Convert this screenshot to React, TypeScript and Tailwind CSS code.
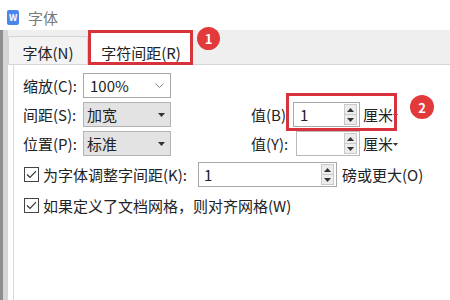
import React from "react";

function Up() {
  return (
    <svg width="7" height="4" viewBox="0 0 7 4">
      <path d="M0 4h7L3.5 0z" fill="#333" />
    </svg>
  );
}
function Down() {
  return (
    <svg width="7" height="4" viewBox="0 0 7 4">
      <path d="M0 0h7L3.5 4z" fill="#333" />
    </svg>
  );
}

function Spinner() {
  return (
    <div className="w-[13px] h-[21px] flex flex-col border border-[#c9c9c9] bg-[#ececec]">
      <div className="flex-1 flex items-center justify-center border-b border-[#c9c9c9]">
        <Up />
      </div>
      <div className="flex-1 flex items-center justify-center">
        <Down />
      </div>
    </div>
  );
}

function Unit() {
  return (
    <div className="flex items-center ml-[3px]">
      <span>厘米</span>
      <svg width="5" height="3" viewBox="0 0 5 3" className="mt-[1px]">
        <path d="M0 0h5L2.5 3z" fill="#333" />
      </svg>
    </div>
  );
}

function Check() {
  return (
    <div className="w-[15px] h-[15px] border border-[#444] bg-white flex items-center justify-center">
      <svg width="11" height="9" viewBox="0 0 11 9">
        <path d="M1 4.5l3 3L10 1.2" stroke="#333" strokeWidth="1.2" fill="none" />
      </svg>
    </div>
  );
}

export default function App() {
  return (
    <div className="w-[450px] h-[300px] bg-white relative overflow-hidden flex flex-col font-['Noto_Sans_CJK_SC','Noto_Sans',sans-serif] text-[15px] text-[#222] leading-none">
      {/* title bar */}
      <div className="h-[30px] flex items-center pl-[7px] pt-[4px] shrink-0">
        <div className="w-[12px] h-[15px] rounded-[2px] bg-[#4a86ec] flex items-center justify-center text-white text-[9px] font-bold">
          W
        </div>
        <span className="ml-[9px] text-[15px] text-[#7a7a7a]">字体</span>
      </div>

      <div className="flex flex-1">
        <div className="w-[8px] border-l-[3px] border-[#8e8e8e] bg-[#d6d6d6]" />
        <div className="flex-1 flex flex-col">
          {/* tab band */}
          <div className="h-[35px] bg-[#efefef] border-b border-[#d7d7d7] flex items-end shrink-0">
            <div className="w-[80px] h-[28px] border border-b-0 border-[#d5d5d5] bg-[#f3f3f3] flex items-center justify-center pt-[3px]">
              字体(N)
            </div>
            <div className="ml-[2px] w-[102px] h-[34px] bg-white -mb-px flex items-center justify-center pt-[8px]">
              字符间距(R)
            </div>
          </div>

          {/* panel */}
          <div className="flex-1 ml-[5px] border-l border-[#dadada] pl-[9px] pt-[8px] flex flex-col">
            <div className="grid grid-cols-[60px_88px_80px_42px_67px_auto] grid-rows-[25px_25px_25px] gap-y-[4px] items-center">
              <span>缩放(C):</span>
              <div className="h-[25px] border border-[#a8a8a8] bg-white flex items-center justify-between pl-[6px] pr-[6px]">
                <span>100%</span>
                <svg width="9" height="5" viewBox="0 0 9 5">
                  <path d="M0.5 0.5l4 4 4-4" stroke="#888" strokeWidth="1" fill="none" />
                </svg>
              </div>
              <span />
              <span />
              <span />
              <span />

              <span>间距(S):</span>
              <div className="h-[25px] border border-[#b3b3b3] bg-[#e3e3e3] flex items-center justify-between pl-[3px] pr-[5px]">
                <span>加宽</span>
                <Down />
              </div>
              <span />
              <span>值(B)</span>
              <div className="h-[25px] border border-[#a8a8a8] bg-white flex items-center justify-between pl-[6px] pr-[2px]">
                <span>1</span>
                <Spinner />
              </div>
              <Unit />

              <span>位置(P):</span>
              <div className="h-[25px] border border-[#b3b3b3] bg-[#e3e3e3] flex items-center justify-between pl-[3px] pr-[5px]">
                <span>标准</span>
                <Down />
              </div>
              <span />
              <span>值(Y):</span>
              <div className="h-[25px] border border-[#b8b8b8] bg-white flex items-center justify-end pr-[2px] ml-[3px]">
                <Spinner />
              </div>
              <Unit />
            </div>

            <div className="mt-[6px] h-[25px] flex items-center">
              <div className="ml-[1px]">
                <Check />
              </div>
              <span className="ml-[4px] w-[155px]">为字体调整字间距(K):</span>
              <div className="w-[139px] h-[25px] border border-[#a8a8a8] bg-white flex items-center justify-between pl-[5px] pr-[2px]">
                <span>1</span>
                <Spinner />
              </div>
              <span className="ml-[5px]">磅或更大(O)</span>
            </div>

            <div className="mt-[6px] h-[25px] flex items-center">
              <div className="ml-[1px]">
                <Check />
              </div>
              <span className="ml-[4px]">如果定义了文档网格，则对齐网格(W)</span>
            </div>
          </div>
        </div>
      </div>

      {/* annotations */}
      <div className="absolute left-[88px] top-[30px] w-[105px] h-[35px] border-[3px] border-[#d8323a]" />
      <div className="absolute left-[197px] top-[27px] w-[23px] h-[23px] rounded-full bg-[#e23a3a] text-white text-[13px] font-bold flex items-center justify-center">
        1
      </div>
      <div className="absolute left-[286px] top-[93px] w-[111px] h-[38px] border-[3px] border-[#d8323a]" />
      <div className="absolute left-[410px] top-[95px] w-[24px] h-[24px] rounded-full bg-[#e23a3a] text-white text-[13px] font-bold flex items-center justify-center">
        2
      </div>
    </div>
  );
}
